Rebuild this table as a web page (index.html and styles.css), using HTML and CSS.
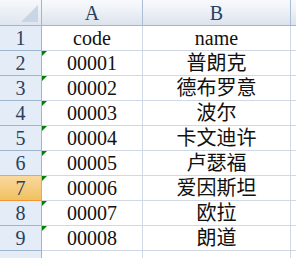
FILE: index.html
```html
<!DOCTYPE html>
<html>
<head>
<meta charset="utf-8">
<link rel="stylesheet" href="styles.css">
</head>
<body>
<div class="sheet">
  <div class="corner"><div class="tri"></div></div>
  <div class="colhead">A</div>
  <div class="colhead">B</div>
  <div class="colhead last"></div>

  <div class="rowhead">1</div><div class="cell">code</div><div class="cell">name</div><div class="cell last"></div>
  <div class="rowhead">2</div><div class="cell txt">00001</div><div class="cell">普朗克</div><div class="cell last"></div>
  <div class="rowhead">3</div><div class="cell txt">00002</div><div class="cell">德布罗意</div><div class="cell last"></div>
  <div class="rowhead">4</div><div class="cell txt">00003</div><div class="cell">波尔</div><div class="cell last"></div>
  <div class="rowhead">5</div><div class="cell txt">00004</div><div class="cell">卡文迪许</div><div class="cell last"></div>
  <div class="rowhead">6</div><div class="cell txt">00005</div><div class="cell">卢瑟福</div><div class="cell last"></div>
  <div class="rowhead sel">7</div><div class="cell txt">00006</div><div class="cell">爱因斯坦</div><div class="cell last"></div>
  <div class="rowhead">8</div><div class="cell txt">00007</div><div class="cell">欧拉</div><div class="cell last"></div>
  <div class="rowhead">9</div><div class="cell txt">00008</div><div class="cell">朗道</div><div class="cell last"></div>
  <div class="rowhead"></div><div class="cell"></div><div class="cell"></div><div class="cell last"></div>
</div>
</body>
</html>
```
FILE: styles.css
```css
html, body {
  margin: 0;
  padding: 0;
  background: #ffffff;
  overflow: hidden;
}
.sheet {
  display: grid;
  grid-template-columns: 42px 101px 148px 5px;
  grid-template-rows: 26px repeat(10, 25px);
  width: 296px;
  height: 258px;
  overflow: hidden;
  font-family: "Liberation Serif", "Noto Sans CJK SC", serif;
  font-size: 20px;
  color: #111;
}
.corner {
  position: relative;
  background: linear-gradient(#f6f8fb, #dfe6ef);
  border-right: 1px solid #9eb6ce;
  border-bottom: 1px solid #9eb6ce;
}
.tri {
  position: absolute;
  right: 3px;
  bottom: 3px;
  width: 0;
  height: 0;
  border-left: 17px solid transparent;
  border-bottom: 17px solid #c9d5e4;
}
.colhead {
  background: linear-gradient(#f8f9fb 0%, #edf1f6 45%, #dbe3ed 100%);
  border-right: 1px solid #a9bdd4;
  border-bottom: 1px solid #9eb6ce;
  display: flex;
  align-items: center;
  justify-content: center;
  color: #27415f;
  line-height: 1;
  padding-top: 1px;
}
.rowhead {
  background: #e4ecf7;
  border-right: 1px solid #9eb6ce;
  border-bottom: 1px solid #9eb6ce;
  display: flex;
  align-items: center;
  justify-content: center;
  color: #27415f;
  line-height: 1;
}
.rowhead.sel {
  background: linear-gradient(#f9d99f, #f1c15f);
  border-bottom-color: #f29536;
}
.cell {
  position: relative;
  border-right: 1px solid #d0d7e5;
  border-bottom: 1px solid #d0d7e5;
  display: flex;
  align-items: center;
  justify-content: center;
  line-height: 1;
  white-space: nowrap;
}
.cell.last, .colhead.last {
  border-right: none;
}
.txt::before {
  content: "";
  position: absolute;
  left: 0;
  top: 0;
  width: 0;
  height: 0;
  border-top: 5px solid #008000;
  border-right: 5px solid transparent;
}
```
